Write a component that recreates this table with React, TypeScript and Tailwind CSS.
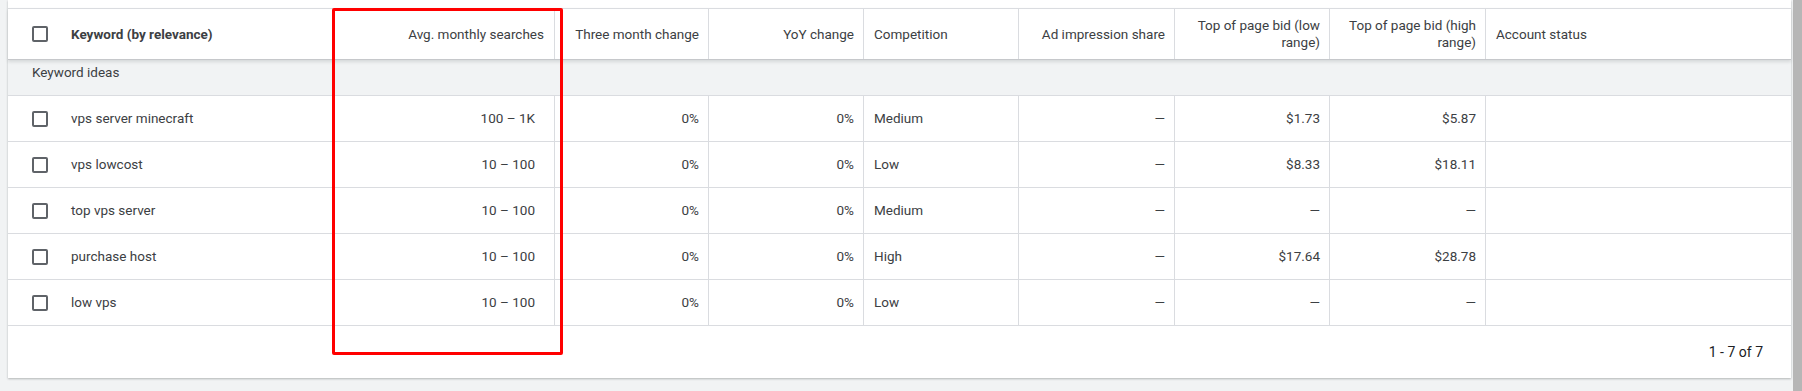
import React from "react";

const rows = [
  { kw: "vps server minecraft", avg: "100 – 1K", comp: "Medium", low: "$1.73", high: "$5.87" },
  { kw: "vps lowcost", avg: "10 – 100", comp: "Low", low: "$8.33", high: "$18.11" },
  { kw: "top vps server", avg: "10 – 100", comp: "Medium", low: "—", high: "—" },
  { kw: "purchase host", avg: "10 – 100", comp: "High", low: "$17.64", high: "$28.78" },
  { kw: "low vps", avg: "10 – 100", comp: "Low", low: "—", high: "—" },
];

const grid =
  "grid grid-cols-[392px_155px_154px_155px_155px_156px_155px_156px_305px]";

function Checkbox() {
  return <div className="w-4 h-4 border-2 border-[#5f6368] rounded-[2px] shrink-0" />;
}

export default function App() {
  return (
    <div
      className="w-[1802px] h-[391px] bg-[#f1f3f4] flex text-[#3c4043] text-[13.5px]"
      style={{ fontFamily: "Roboto, 'Liberation Sans', sans-serif" }}
    >
      <div className="relative ml-2 w-[1783px] h-[378px] bg-white pt-2 shadow-[0_1px_2px_rgba(60,64,67,0.35)] flex flex-col">
        {/* header */}
        <div
          className={`${grid} h-[52px] border-t border-[#dadce0] border-b border-b-[#c6c8cb] shadow-[0_2px_3px_rgba(60,64,67,0.15)] relative z-10`}
        >
          <div className="flex items-center pl-6 gap-[23px]">
            <Checkbox />
            <span className="font-bold">Keyword (by relevance)</span>
          </div>
          <div className="flex items-center justify-end pr-[10px] border-r border-[#dadce0]">
            Avg. monthly searches
          </div>
          <div className="flex items-center justify-end pr-[9px] border-r border-[#dadce0]">
            Three month change
          </div>
          <div className="flex items-center justify-end pr-[9px] border-r border-[#dadce0]">
            YoY change
          </div>
          <div className="flex items-center pl-[10px] border-r border-[#dadce0]">Competition</div>
          <div className="flex items-center justify-end pr-[9px] border-r border-[#dadce0]">
            Ad impression share
          </div>
          <div className="flex items-center justify-end text-right pr-[9px] leading-[17px] border-r border-[#dadce0]">
            Top of page bid (low
            <br />
            range)
          </div>
          <div className="flex items-center justify-end text-right pr-[9px] leading-[17px] border-r border-[#dadce0]">
            Top of page bid (high
            <br />
            range)
          </div>
          <div className="flex items-center pl-[10px]">Account status</div>
        </div>
        {/* group row */}
        <div className="h-[36px] bg-[#f1f3f4] border-b border-[#dadce0] flex items-start pt-[3px] leading-[18px] pl-6">
          Keyword ideas
        </div>
        {rows.map((r) => (
          <div key={r.kw} className={`${grid} h-[46px] border-b border-[#dadce0]`}>
            <div className="flex items-center pl-6 gap-[23px]">
              <Checkbox />
              <span>{r.kw}</span>
            </div>
            <div className="flex items-center justify-end pr-[19px] border-r border-[#dadce0]">{r.avg}</div>
            <div className="flex items-center justify-end pr-[9px] border-r border-[#dadce0]">0%</div>
            <div className="flex items-center justify-end pr-[9px] border-r border-[#dadce0]">0%</div>
            <div className="flex items-center pl-[10px] border-r border-[#dadce0]">{r.comp}</div>
            <div className="flex items-center justify-end pr-[9px] border-r border-[#dadce0]">—</div>
            <div className="flex items-center justify-end pr-[9px] border-r border-[#dadce0]">{r.low}</div>
            <div className="flex items-center justify-end pr-[9px] border-r border-[#dadce0]">{r.high}</div>
            <div />
          </div>
        ))}
        {/* footer */}
        <div className="flex-1 flex items-center justify-end pr-7 text-[14px] text-[#202124]">
          1 - 7 of 7
        </div>
        {/* annotation */}
        <div className="absolute left-[324px] top-2 w-[231px] h-[347px] border-[3px] border-[#ff0000] rounded-[2px] z-20" />
      </div>
      <div className="ml-[2px] w-[9px] h-full bg-[#b6b6b6]" />
    </div>
  );
}
